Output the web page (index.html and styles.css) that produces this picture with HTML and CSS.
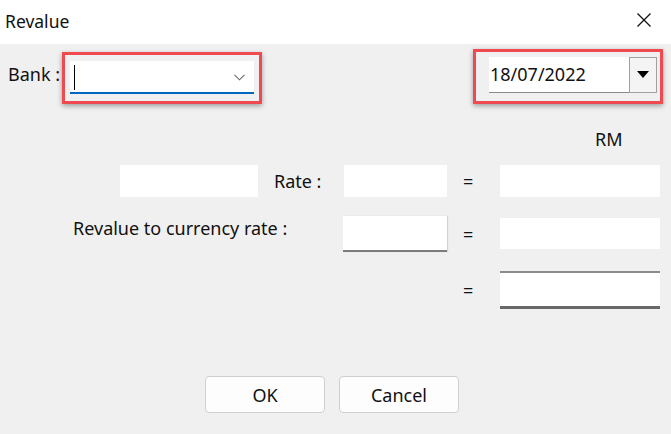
FILE: index.html
```html
<!DOCTYPE html>
<html>
<head>
<meta charset="utf-8">
<title>Revalue</title>
<link rel="stylesheet" href="styles.css">
</head>
<body>
<div class="dialog">
  <div class="titlebar">
    <span class="title">Revalue</span>
    <svg class="close" width="16" height="16" viewBox="0 0 16 16"><path d="M1.5 1.5 L14.5 14.5 M14.5 1.5 L1.5 14.5" stroke="#111" stroke-width="1.3" fill="none"/></svg>
  </div>
  <div class="content">
    <div class="toprow">
      <div class="bankgroup">
        <span class="label banklabel">Bank :</span>
        <div class="mark mark-bank">
          <div class="combo">
            <span class="caret"></span>
            <svg class="chev" width="11" height="7" viewBox="0 0 11 7"><path d="M0.5 0.8 L5.5 5.8 L10.5 0.8" stroke="#6a6a6a" stroke-width="1.1" fill="none"/></svg>
          </div>
        </div>
      </div>
      <div class="mark mark-date">
        <div class="datepick">
          <span class="datetext">18/07/2022</span>
          <span class="datebtn"><svg width="12" height="8" viewBox="0 0 12 8"><path d="M0 0 L12 0 L6 7 Z" fill="#000"/></svg></span>
        </div>
      </div>
    </div>
    <div class="form">
      <div class="rm">RM</div>
      <div class="field f-a"></div>
      <div class="label ratelabel">Rate :</div>
      <div class="field f-b"></div>
      <div class="eq eq1">=</div>
      <div class="field f-c"></div>

      <div class="label revlabel">Revalue to currency rate :</div>
      <div class="field f-b2"></div>
      <div class="eq eq2">=</div>
      <div class="field f-c2"></div>

      <div class="eq eq3">=</div>
      <div class="field f-c3"></div>
    </div>
    <div class="buttons">
      <button class="btn">OK</button>
      <button class="btn">Cancel</button>
    </div>
  </div>
</div>
</body>
</html>
```
FILE: styles.css
```css
* { box-sizing: border-box; }
html, body { margin: 0; padding: 0; }
body {
  width: 671px;
  height: 434px;
  overflow: hidden;
  background: #f0f0f0;
  font-family: "Noto Sans", "Open Sans", sans-serif;
  color: #111;
}
.dialog { width: 671px; height: 434px; display: flex; flex-direction: column; }
.titlebar {
  height: 44px;
  background: #fff;
  display: flex;
  align-items: center;
  justify-content: space-between;
  padding: 0 19px 0 5px;
}
.title { font-size: 17.5px; line-height: 22px; margin-top: -2px; }
.close { display: block; margin-top: -4px; }
.content { flex: 1; display: flex; flex-direction: column; }
.toprow {
  display: flex;
  justify-content: space-between;
  align-items: flex-start;
  padding: 5px 8px 0 8px;
}
.bankgroup { display: flex; align-items: flex-start; margin-top: 3px; }
.label { font-size: 18px; line-height: 22px; white-space: nowrap; }
.banklabel { width: 54px; padding-top: 11px; }
.mark {
  border: 3px solid #ee4a50;
  box-shadow: 0 2px 5px rgba(0,0,0,0.35);
}
.mark-bank { width: 200px; height: 52px; padding: 6px 5px 0 5px; }
.combo {
  height: 33px;
  background: #fff;
  border-bottom: 2px solid #0067c0;
  display: flex;
  align-items: center;
  justify-content: space-between;
  padding: 0 9px 0 4px;
}
.caret { width: 1px; height: 25px; background: #000; margin-top: 1px; }
.chev { display: block; margin-top: 1px; }
.mark-date { width: 190px; height: 55px; padding: 5px 3px 0 13px; }
.datepick {
  height: 36px;
  background: #fff;
  display: flex;
  align-items: stretch;
}
.datetext {
  flex: 1;
  font-size: 18px;
  line-height: 34px;
  padding-left: 1px;
  border-bottom: 1px solid #8a8a8a;
}
.datebtn {
  width: 28px;
  border: 1px solid #a0a0a0;
  background: #f4f4f4;
  display: flex;
  align-items: center;
  justify-content: center;
}
.datebtn svg { display: block; }

.form {
  display: grid;
  grid-template-columns: 120px 138px 86px 103px 53px 160px;
  grid-template-rows: 14px 32px 36px 38px;
  row-gap: 19px;
  margin-top: 28px;
}
.rm {
  grid-column: 6;
  grid-row: 1;
  font-size: 18px;
  line-height: 14px;
  padding-left: 95px;
}
.field { background: #fff; }
.f-a { grid-column: 2; grid-row: 2; }
.ratelabel { grid-column: 3; grid-row: 2; padding-left: 16px; align-self: center; }
.f-b { grid-column: 4; grid-row: 2; }
.eq { font-size: 18px; line-height: 22px; padding-left: 16px; align-self: center; grid-column: 5; }
.eq1 { grid-row: 2; }
.eq2 { grid-row: 3; }
.eq3 { grid-row: 4; }
.f-c { grid-column: 6; grid-row: 2; }
.revlabel { grid-column: 1 / 4; grid-row: 3; padding-left: 73px; padding-top: 1px; }
.f-b2 {
  grid-column: 4; grid-row: 3;
  margin-left: -1px;
  border-bottom: 2px solid #7c7c7c;
  box-shadow: 1px 0 1px rgba(0,0,0,0.12);
}
.f-c2 { grid-column: 6; grid-row: 3; margin: 2px 0 3px 0; }
.f-c3 {
  grid-column: 6; grid-row: 4;
  border-top: 2px solid #8c8c8c;
  border-bottom: 3px solid #686868;
}
.buttons {
  display: flex;
  gap: 14px;
  padding-left: 205px;
  margin-top: 67px;
}
.btn {
  width: 120px;
  height: 37px;
  background: #fdfdfd;
  border: 1px solid #cfcfcf;
  border-radius: 4px;
  font-family: "Noto Sans", "Open Sans", sans-serif;
  font-size: 18px;
  color: #111;
  padding: 0;
}
```
